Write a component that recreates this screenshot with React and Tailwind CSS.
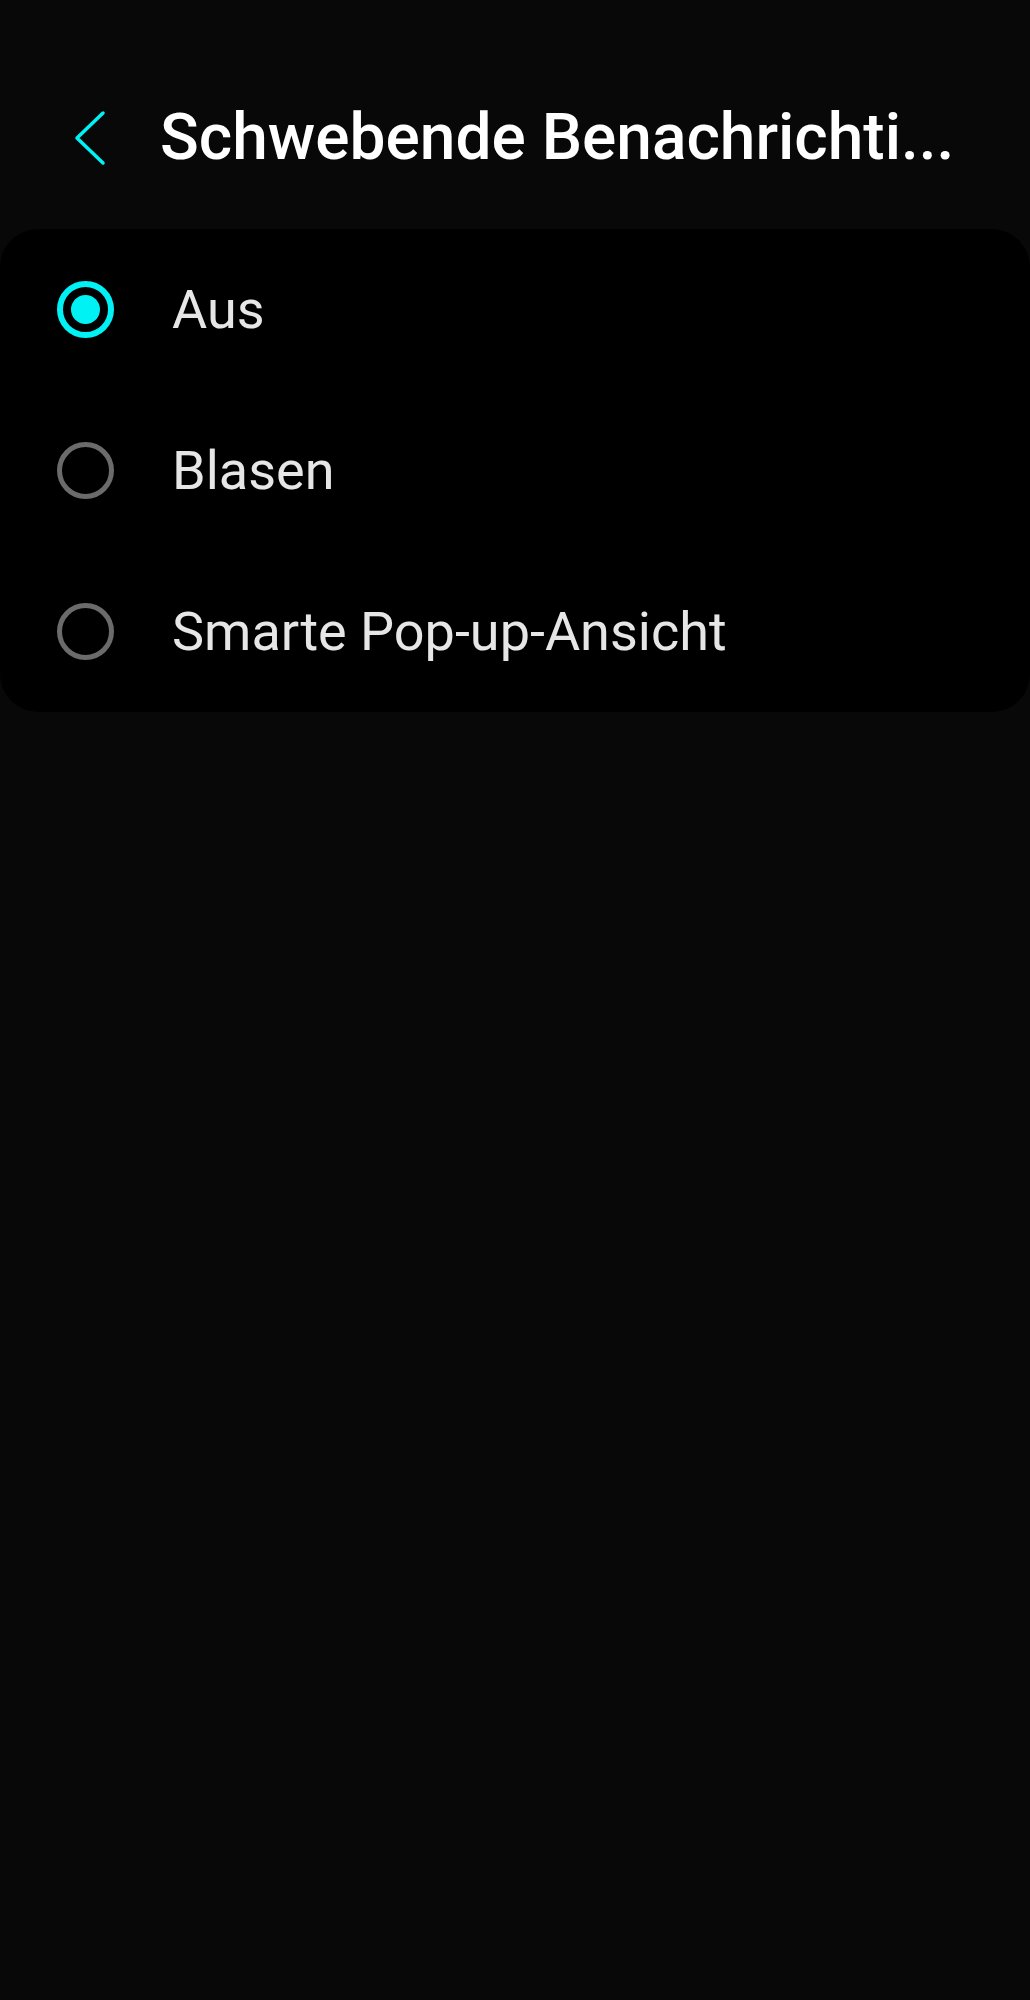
import { useState } from 'react'

const options = ['Aus', 'Blasen', 'Smarte Pop-up-Ansicht']

function Radio({ checked }) {
  if (checked) {
    return (
      <span className="flex h-[57px] w-[57px] shrink-0 items-center justify-center rounded-full border-[6px] border-[#00f2f5]">
        <span className="block h-[29px] w-[29px] rounded-full bg-[#00f2f5]" />
      </span>
    )
  }
  return <span className="block h-[57px] w-[57px] shrink-0 rounded-full border-[5px] border-[#6b6b6b]" />
}

export default function App() {
  const [selected, setSelected] = useState(0)

  return (
    <div className="min-h-[2000px] bg-[#080808] font-['Roboto',sans-serif]">
      {/* Header */}
      <div className="flex h-[229px] items-center pt-[46px]">
        <button className="ml-[72px] flex h-[56px] w-[36px] items-center justify-center">
          <svg width="34" height="56" viewBox="0 0 34 56" fill="none">
            <path d="M30 3 L4 28 L30 53" stroke="#00f2f5" strokeWidth="3.5" strokeLinecap="round" strokeLinejoin="round" />
          </svg>
        </button>
        <h1 className="ml-[52px] whitespace-nowrap text-[64px] font-medium leading-none text-white">
          Schwebende Benachrichti...
        </h1>
      </div>

      {/* Options */}
      <div className="rounded-[38px] bg-black">
        {options.map((label, i) => (
          <div
            key={label}
            onClick={() => setSelected(i)}
            className="flex h-[161px] cursor-pointer items-center"
          >
            <div className="ml-[57px]">
              <Radio checked={selected === i} />
            </div>
            <span className="ml-[58px] text-[54px] leading-none text-[#e6e6e6]">{label}</span>
          </div>
        ))}
      </div>
    </div>
  )
}
